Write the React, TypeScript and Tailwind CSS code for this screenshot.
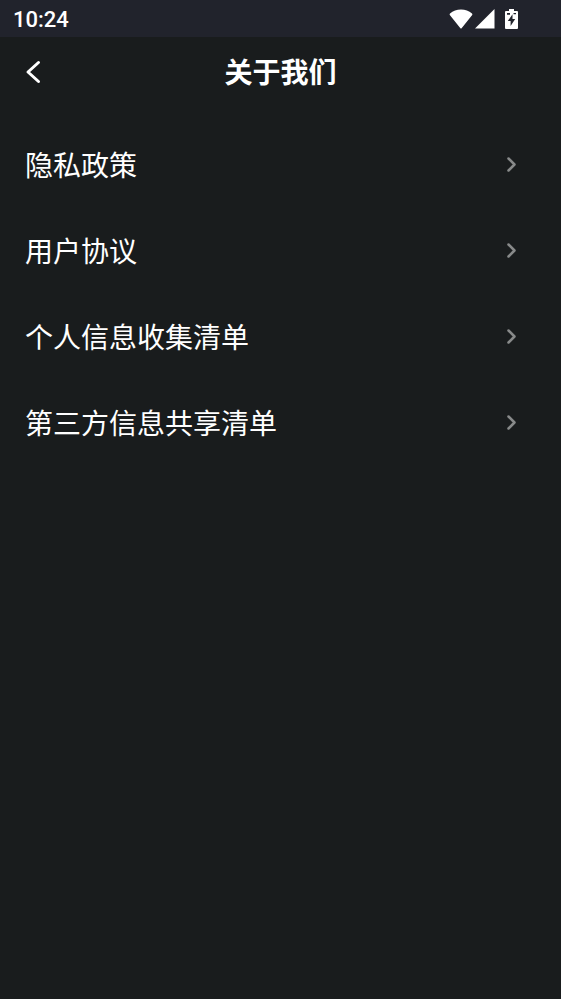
const links = [
  { name: "隐私政策", path: "#privacy" },
  { name: "用户协议", path: "#agreement" },
  { name: "个人信息收集清单", path: "#personal-info" },
  { name: "第三方信息共享清单", path: "#third-party" },
];

function StatusBar() {
  return (
    <div className="flex h-[37px] items-center justify-between bg-[#21232c] pr-[43px] pl-[13px] text-white">
      <span className="pt-0.5 font-[Roboto,sans-serif] text-[22px] leading-6 font-medium">10:24</span>
      <div className="flex items-center">
        <svg width="24" height="20" viewBox="0 0 24 20" fill="currentColor" aria-hidden="true">
          <path d="M12.600 19.300Q12 19.900 11.400 19.300L.8 6Q.3 5.200 1 4.600C4 1.800 7.800.5 12 .5s8 1.300 11 4.100q.7.600.2 1.400Z" />
        </svg>
        <svg className="ml-0.5" width="20" height="20" viewBox="0 0 20 20" fill="currentColor" aria-hidden="true">
          <path d="M0 19.500 19.500 0v19.500Z" />
        </svg>
        <svg className="ml-2.5" width="13" height="20" viewBox="0 0 13 20" fill="currentColor" aria-hidden="true">
          <path fillRule="evenodd" d="M4 0h5v2h3q1 0 1 1v16q0 1-1 1H1q-1 0-1-1V3q0-1 1-1h3ZM2 4v1.800h3V4Zm6.500 0v1.200H11V4ZM7.500 5.200 2.800 12h2.800v5L10.200 10H7.500Z" />
        </svg>
      </div>
    </div>
  );
}

export default function App() {
  return (
    <div className="min-h-screen bg-[#191c1d] font-['Noto_Sans_CJK_SC',sans-serif] text-white">
      <StatusBar />

      {/* Header */}
      <header className="grid h-[70px] grid-cols-[64px_1fr_64px] items-center">
        <button type="button" aria-label="返回" className="flex h-full items-center pl-[25px]">
          <svg width="16" height="24" viewBox="0 0 16 24" fill="none" stroke="currentColor" strokeWidth="3" strokeLinecap="round" strokeLinejoin="round">
            <path d="M13.500 2.500 3 12l10.500 9.500" />
          </svg>
        </button>
        <h1 className="pb-0.5 text-center text-[28px] leading-10 font-bold">关于我们</h1>
      </header>

      {/* Links */}
      <nav className="flex flex-col pt-[15px]">
        {links.map((link) => (
          <a key={link.path} href={link.path} className="flex h-[86px] items-center justify-between pr-11 pl-[25px]">
            <span className="pb-0.5 text-[28px] leading-10">{link.name}</span>
            <svg width="10" height="16" viewBox="0 0 10 16" fill="none" stroke="#888a8a" strokeWidth="2.500" strokeLinecap="round" strokeLinejoin="round">
              <path d="m1.500 1.500 6 6-6 6" />
            </svg>
          </a>
        ))}
      </nav>
    </div>
  );
}
